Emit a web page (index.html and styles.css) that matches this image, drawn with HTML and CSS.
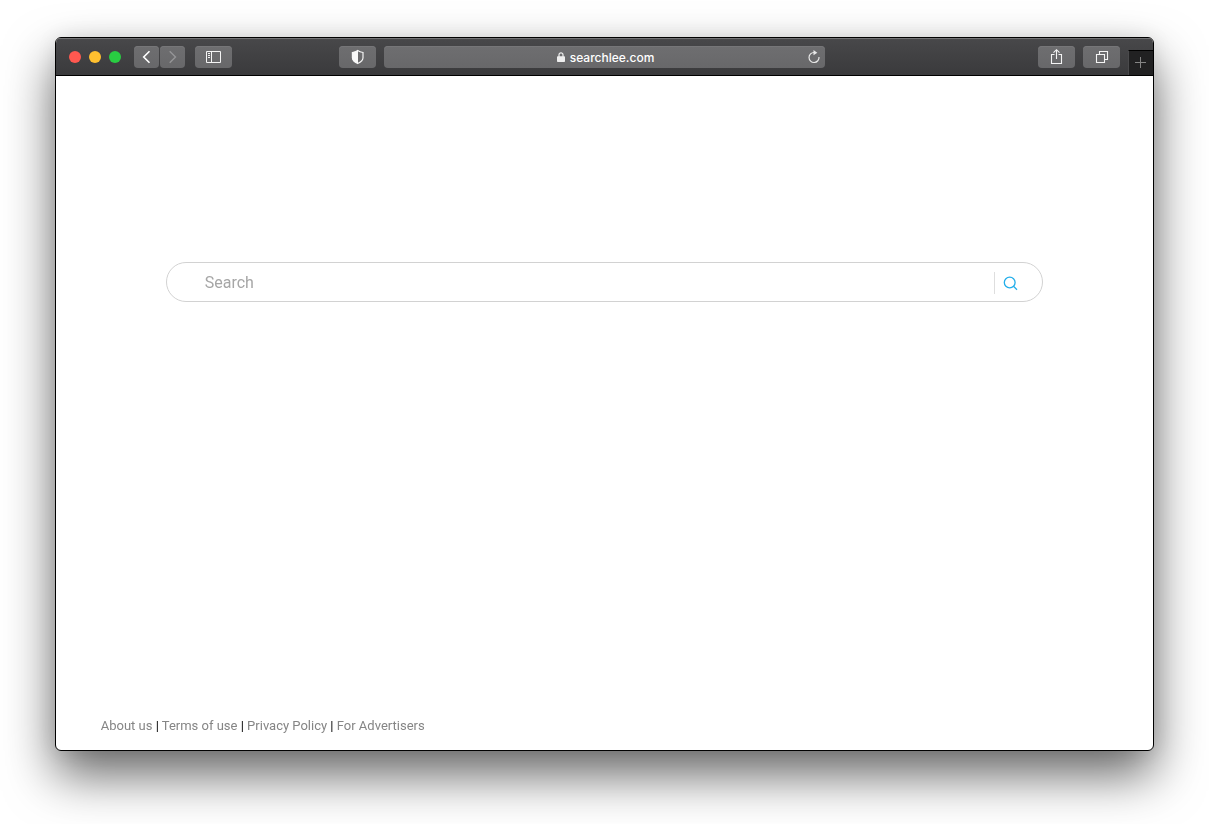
FILE: index.html
```html
<!DOCTYPE html>
<html lang="en">
<head>
<meta charset="utf-8">
<meta name="viewport" content="width=device-width, initial-scale=1">
<title>searchlee.com</title>
<link rel="stylesheet" href="styles.css">
</head>
<body>
<div class="window">
  <header class="toolbar">
    <div class="side side-left">
      <div class="lights">
        <button class="light light-close" aria-label="Close"></button>
        <button class="light light-minimize" aria-label="Minimize"></button>
        <button class="light light-zoom" aria-label="Zoom"></button>
      </div>
      <div class="history">
        <button class="tool tool-narrow" aria-label="Back"><svg width="25" height="22" viewBox="0 0 25 22" fill="none" stroke="#fff" stroke-width="1.6"><path d="M15.5 5.2 9.7 11l5.8 5.8"/></svg></button>
        <button class="tool tool-narrow" aria-label="Forward"><svg width="25" height="22" viewBox="0 0 25 22" fill="none" stroke="#959597" stroke-width="1.4"><path d="M9.7 5.2l5.8 5.8-5.8 5.8"/></svg></button>
      </div>
      <button class="tool" aria-label="Show sidebar"><svg width="37" height="22" viewBox="0 0 37 22" fill="none" stroke="#f4f4f4"><path d="M11.500 5.500h14v11h-14zM16.500 5.500v11M13 7.500h2M13 9.500h2M13 11.500h2"/></svg></button>
      <button class="tool tool-shield" aria-label="Privacy report"><svg width="37" height="22" viewBox="0 0 37 22"><path d="M18.700 4.600c1.600 1.200 3.300 1.700 5.300 1.900v5.300c0 2.500-2.200 4.300-5.300 5.700-3.100-1.400-5.300-3.200-5.300-5.700V6.500c2-.2 3.700-.7 5.300-1.900z" fill="none" stroke="#f4f4f4" stroke-width="1.200"/><path d="M19 4.300v13.500c-3.500-1.500-5.900-3.400-5.900-6V6.200c2.400-.2 4.200-.7 5.900-1.900z" fill="#f8f8f8"/></svg></button>
    </div>
    <div class="address">
      <div class="location">
        <svg width="8" height="10" viewBox="0 0 8 10"><path d="M2 5V2.800a2 2 0 0 1 4 0V5" fill="none" stroke="#eee" stroke-width="1.200"/><rect y="4.300" width="8" height="5.700" rx=".8" fill="#eee"/></svg>
        <span>searchlee.com</span>
      </div>
      <button class="reload" aria-label="Reload"><svg width="14" height="14" viewBox="0 0 14 14"><path d="M7.200 2.500A5 5 0 1 0 12 7" fill="none" stroke="#e8e8e8" stroke-width="1.200"/><path d="M6.500 0 10.300 2.700 6.500 5.300z" fill="#e8e8e8"/></svg></button>
    </div>
    <div class="side side-right">
      <button class="tool" aria-label="Share"><svg width="37" height="22" viewBox="0 0 37 22" fill="none" stroke="#f4f4f4" stroke-width="1.100"><path d="M16.500 8.500h-3v9h10v-9h-3M18.500 13V4M15.500 6.700l3-3 3 3"/></svg></button>
      <button class="tool" aria-label="Tab overview"><svg width="37" height="22" viewBox="0 0 37 22" fill="none" stroke="#f4f4f4" stroke-width="1.100"><path d="M13.500 8.500h8v8h-8zM16.500 8.500v-3h8v8h-3"/></svg></button>
      <button class="new-tab" aria-label="New tab"><svg width="24" height="24" viewBox="0 0 24 24" stroke="#858585"><path d="M6 11.500h11M11.500 6v11"/></svg></button>
    </div>
  </header>
  <main class="page">
    <form class="search" role="search">
      <input class="search-input" type="text" placeholder="Search" aria-label="Search">
      <button class="search-button" type="button" aria-label="Submit search"><svg width="15" height="15" viewBox="0 0 15 15" fill="none" stroke="#22aeea" stroke-width="1.300"><circle cx="6.700" cy="6.500" r="5.400"/><path d="M10.500 10.300l3.500 3.500"/></svg></button>
    </form>
    <footer class="footer">
      <a href="#about">About us</a> | <a href="#terms">Terms of use</a> | <a href="#privacy">Privacy Policy</a> | <a href="#advertisers">For Advertisers</a>
    </footer>
  </main>
</div>
</body>
</html>
```

FILE: styles.css
```css
* {
  box-sizing: border-box;
}

body {
  display: flex;
  min-height: 100vh;
  margin: 0;
  padding: 37px 55px 73px;
  background: #fff;
  font-family: Roboto, "Liberation Sans", sans-serif;
}

button {
  display: flex;
  align-items: center;
  justify-content: center;
  flex: none;
  margin: 0;
  padding: 0;
  border: 0;
  background: none;
}

svg {
  display: block;
  flex: none;
}

.window {
  display: flex;
  flex-direction: column;
  flex: 1;
  min-width: 0;
  overflow: hidden;
  border: 1px solid #000;
  border-radius: 6px;
  background: #fff;
  box-shadow: 0 24px 50px rgba(0, 0, 0, 0.6), 0 0 20px rgba(0, 0, 0, 0.08);
}

.toolbar {
  display: grid;
  grid-template-columns: 1fr minmax(0, 441px) 1fr;
  height: 38px;
  border-bottom: 1px solid #000;
  background: linear-gradient(#48484a, #3a3a3c);
  box-shadow: inset 0 1px #727274;
}

.side {
  display: flex;
  padding-top: 8px;
}

.side-left {
  gap: 10px;
  padding-left: 13px;
  padding-right: 8px;
}

.side-right {
  justify-content: flex-end;
  gap: 8px;
}

.lights {
  display: flex;
  align-items: center;
  gap: 8px;
  height: 22px;
  margin-right: 3px;
}

.light {
  width: 12px;
  height: 12px;
  border-radius: 50%;
}

.light-close {
  background: #ff5850;
}

.light-minimize {
  background: #ffc02f;
}

.light-zoom {
  background: #29cd42;
}

.history {
  display: flex;
  gap: 1px;
}

.tool {
  width: 37px;
  height: 22px;
  border-radius: 4px;
  background: linear-gradient(#6e6e70, #68686a);
  box-shadow: inset 0 1px #767678;
}

.tool-narrow {
  width: 25px;
}

.tool-shield {
  margin-left: auto;
}

.address {
  display: flex;
  align-items: center;
  height: 22px;
  margin-top: 8px;
  padding: 0 4px 0 20px;
  border-radius: 4px;
  background: linear-gradient(#6e6e70, #68686a);
  box-shadow: inset 0 1px #767678;
}

.location {
  display: flex;
  align-items: center;
  justify-content: center;
  flex: 1;
  gap: 5px;
  color: #fff;
  font: 500 12px/24px Inter, "Liberation Sans", sans-serif;
}

.location span {
  padding-top: 1px;
}

.new-tab {
  width: 25px;
  height: 25px;
  margin-top: 4px;
  border-top: 1px solid #000;
  border-left: 1px solid #4a4a4c;
  background: #212122;
}

.page {
  display: flex;
  flex-direction: column;
  justify-content: space-between;
  flex: 1;
  padding: 186px 10% 15px;
  will-change: opacity;
}

.search {
  display: flex;
  align-items: center;
  height: 40px;
  padding: 2px 24px 0 38px;
  border: 1px solid #d2d2d2;
  border-radius: 20px;
}

.search-input {
  flex: 1;
  min-width: 0;
  padding: 0;
  border: 0;
  outline: 0;
  background: none;
  color: #333;
  font: 16px/24px Roboto, "Liberation Sans", sans-serif;
}

.search-input::placeholder {
  color: #a6a6a6;
  opacity: 1;
}

.search-button {
  justify-content: flex-end;
  width: 24px;
  height: 22px;
  border-left: 1px solid #dedede;
}

.footer {
  margin: 0 -65px;
  color: #000;
  font-size: 13px;
  line-height: 18px;
}

.footer a {
  color: #858585;
  text-decoration: none;
}
```
